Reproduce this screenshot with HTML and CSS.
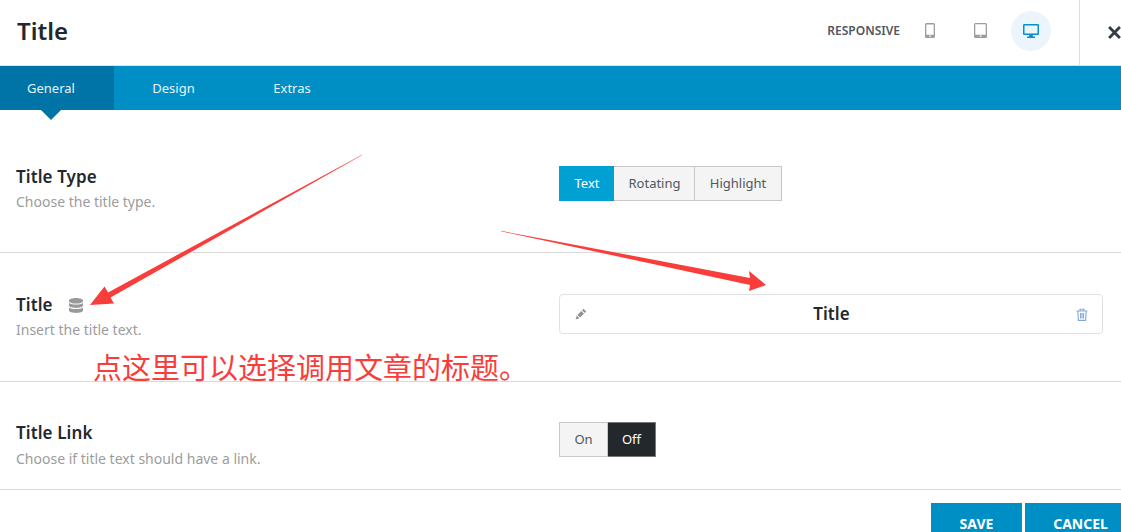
FILE: index.html
```html
<!DOCTYPE html>
<html lang="en">
<head>
    <meta charset="UTF-8">
    <meta name="viewport" content="width=device-width, initial-scale=1.0">
    <title>Title</title>
    <link rel="stylesheet" href="styles.css">
</head>
<body>
    <header class="top-bar">
        <h1 class="top-title">Title</h1>
        <div class="responsive">
            <span class="responsive-label">RESPONSIVE</span>
            <button class="device-btn" type="button">
                <svg width="10" height="15" viewBox="0 0 10 15"><path fill="#9a9ea3" fill-rule="evenodd" d="M1.5 0h7A1.5 1.5 0 0 1 10 1.500v12A1.500 1.500 0 0 1 8.500 15h-7A1.500 1.500 0 0 1 0 13.500v-12A1.500 1.500 0 0 1 1.500 0zM1.300 1.500v10.200h7.400V1.500zM4.200 12.500v1.300h1.600v-1.300z"/></svg>
            </button>
            <button class="device-btn" type="button">
                <svg width="13" height="15" viewBox="0 0 13 15"><path fill="#9a9ea3" fill-rule="evenodd" d="M1.500 0h10A1.500 1.500 0 0 1 13 1.500v12a1.500 1.500 0 0 1-1.500 1.500h-10A1.500 1.500 0 0 1 0 13.500v-12A1.500 1.500 0 0 1 1.500 0zM1.300 1.300v10.500h10.400V1.300zM5.700 12.500v1.300h1.600v-1.300z"/></svg>
            </button>
            <button class="device-btn device-active" type="button">
                <svg width="16" height="14" viewBox="0 0 16 14"><path fill="#0b8fc7" fill-rule="evenodd" d="M1.200 0h13.600A1.200 1.200 0 0 1 16 1.200v8.600A1.200 1.200 0 0 1 14.800 11H9.800v1.500H12V14H4v-1.500h2.200V11H1.200A1.200 1.200 0 0 1 0 9.800V1.200A1.200 1.200 0 0 1 1.200 0zM1.500 1.500v8h13v-8z"/></svg>
            </button>
        </div>
        <button class="close-btn" type="button">
            <svg width="13" height="13" viewBox="0 0 12 12"><path stroke="#333b45" stroke-width="2.600" d="M1 1l10 10M11 1L1 11"/></svg>
        </button>
    </header>

    <nav class="tabs">
        <a class="tab tab-active">General</a>
        <a class="tab">Design</a>
        <a class="tab">Extras</a>
    </nav>

    <main>
        <section class="row row-type">
            <div class="row-info">
                <h2 class="row-title">Title Type</h2>
                <p class="row-desc">Choose the title type.</p>
            </div>
            <div class="btn-group">
                <span class="opt opt-blue">Text</span>
                <span class="opt opt-rotating">Rotating</span>
                <span class="opt opt-highlight">Highlight</span>
            </div>
        </section>

        <section class="row row-text">
            <div class="row-info">
                <h2 class="row-title">Title
                    <svg class="db-icon" width="14" height="15" viewBox="0 0 14 15"><path fill="#9a9a9a" d="M7 0c3.800 0 7 1 7 2.400v.8C14 4.600 10.800 5.600 7 5.600S0 4.600 0 3.200v-.8C0 1 3.200 0 7 0zM0 5c1.500 1 4 1.500 7 1.500S12.500 6 14 5v2.600C14 9 10.800 10 7 10S0 9 0 7.600zM0 9.400c1.500 1 4 1.500 7 1.500s5.500-.5 7-1.500v3.200C14 14 10.800 15 7 15s-7-1-7-2.400z"/></svg>
                </h2>
                <p class="row-desc">Insert the title text.</p>
            </div>
            <div class="title-field">
                <svg width="12" height="12" viewBox="0 0 12 12"><path fill="#8d9296" d="M8.500.8l2.700 2.700-1.500 1.500L7 2.300zM6.300 3l2.700 2.700-4 3.800-2.600-2.600zM1.800 7.600l2.600 2.600L.6 11.400z"/></svg>
                <span class="field-text">Title</span>
                <svg width="12" height="13" viewBox="0 0 12 13"><path fill="none" stroke="#85a9d8" stroke-width="1.100" d="M.5 3h11M4 3V1.200h4V3M1.800 3l.6 9.400h7.200l.6-9.400M4.500 5v5.500M6 5v5.500M7.500 5v5.500"/></svg>
            </div>
        </section>

        <section class="row row-link">
            <div class="row-info">
                <h2 class="row-title">Title Link</h2>
                <p class="row-desc">Choose if title text should have a link.</p>
            </div>
            <div class="btn-group">
                <span class="opt opt-on">On</span>
                <span class="opt opt-dark">Off</span>
            </div>
        </section>
    </main>

    <footer class="actions">
        <button class="action-btn btn-save" type="button">SAVE</button>
        <button class="action-btn btn-cancel" type="button">CANCEL</button>
    </footer>

    <!-- red notes drawn on top of the screenshot -->
    <svg class="notes" width="1121" height="532" viewBox="0 0 1121 532">
        <path fill="#f93d3b" d="M362 154.700L362.300 155.100 110.500 297.500 114 303.500 90 305 104.500 286.500 108 292.500z"/>
        <path fill="#f93d3b" d="M501 230.800L750 278 749 271 766 285 749 291 750 285 501 231.200z"/>
    </svg>
    <div class="note-text">点这里可以选择调用文章的标题。</div>
</body>
</html>
```

FILE: styles.css
```css
* {
    box-sizing: border-box;
}
html, body {
    height: 532px;
    overflow: hidden;
}
body {
    position: relative;
    margin: 0;
    background: white;
    color: #23282d;
    font-family: "Noto Sans", "Open Sans", sans-serif;
}
button {
    font-family: inherit;
    border: none;
    background: none;
    padding: 0;
}

/* top bar */
.top-bar {
    display: flex;
    align-items: center;
    height: 66px;
    border-bottom: 1px solid #e1e1e1;
    padding-left: 17px;
}
.top-title {
    margin: 0 0 4px;
    font-size: 24px;
    line-height: 32px;
    font-weight: 600;
    flex: 1;
}
.responsive {
    display: flex;
    align-items: center;
    margin-bottom: 4px;
    margin-right: 28px;
}
.responsive-label {
    font-size: 12px;
    font-weight: 600;
    color: #50575e;
    margin-right: 10px;
}
.device-btn {
    width: 40px;
    height: 40px;
    border-radius: 50%;
    display: flex;
    align-items: center;
    justify-content: center;
}
.device-btn + .device-btn {
    margin-left: 10px;
}
.device-btn.device-active {
    margin-left: 11px;
    background: #edf5fc;
}
.close-btn {
    width: 42px;
    height: 65px;
    border-left: 1px solid #dcdcdc;
    display: flex;
    align-items: center;
    justify-content: flex-start;
    padding-left: 28px;
    flex: none;
}

/* tabs */
.tabs {
    display: flex;
    height: 44px;
    background: #008fc5;
}
.tab {
    position: relative;
    width: 118px;
    font-size: 13px;
    line-height: 44px;
    color: #e6f4fa;
    text-align: center;
}
.tabs .tab:first-child {
    width: 114px;
    padding-right: 12px;
}
.tabs .tab:nth-child(2) {
    width: 119px;
}
.tab-active {
    background: #0074a7;
}
.tab-active::after {
    content: "";
    position: absolute;
    left: 41px;
    top: 100%;
    border-left: 10px solid transparent;
    border-right: 10px solid transparent;
    border-top: 10px solid #0074a7;
}

/* option rows */
.row {
    display: grid;
    grid-template-columns: 543px 544px;
    border-bottom: 1px solid #d9d9d9;
    padding-left: 16px;
}
.row-type {
    height: 143px;
    padding-top: 56px;
}
.row-text {
    height: 129px;
    padding-top: 41px;
}
.row-link {
    height: 108px;
    padding-top: 40px;
}
.row-title {
    margin: 0;
    font-size: 17px;
    letter-spacing: 0.100px;
    line-height: 22px;
    font-weight: 600;
    display: flex;
    align-items: center;
}
.db-icon {
    margin-left: 16px;
}
.row-desc {
    margin: 4px 0 0;
    font-size: 14px;
    line-height: 19px;
    color: #9c9c9c;
}
.row-link .row-desc {
    margin-top: 5px;
}
.btn-group {
    display: flex;
    height: 35px;
}
.opt {
    font-size: 13px;
    line-height: 33px;
    text-align: center;
    color: #50575e;
    background: #f4f4f4;
    border: 1px solid #c8c8c8;
    border-left-width: 0;
}
.opt:first-child {
    border-left-width: 1px;
}
.opt-blue {
    width: 55px;
    padding-left: 1px;
    background: #00a0d2;
    border-color: #00a0d2;
    color: white;
}
.opt-rotating {
    width: 81px;
    padding-left: 1px;
}
.opt-highlight {
    width: 87px;
}
.opt-on {
    width: 49px;
}
.opt-dark {
    width: 48px;
    background: #23282d;
    border-color: #777;
    color: white;
}
.title-field {
    display: flex;
    align-items: center;
    justify-content: space-between;
    height: 40px;
    padding: 0 14px 0 15px;
    border: 1px solid #e1e1e1;
    border-radius: 4px;
}
.field-text {
    font-size: 17px;
    letter-spacing: 0.100px;
    font-weight: 600;
    margin-bottom: 2px;
}

/* footer buttons */
.actions {
    display: flex;
    justify-content: flex-end;
    gap: 3px;
    padding-top: 13px;
    margin-right: -15px;
}
.action-btn {
    width: 91px;
    height: 50px;
    padding-bottom: 10px;
    background: #008fc5;
    color: white;
    font-size: 14px;
    font-weight: 700;
}
.btn-cancel {
    width: 111px;
}

/* annotations */
.notes {
    position: absolute;
    left: 0;
    top: 0;
    pointer-events: none;
}
.note-text {
    position: absolute;
    left: 93px;
    top: 345px;
    font-family: "Noto Sans CJK SC", sans-serif;
    font-size: 29px;
    line-height: 42px;
    color: #f93d3b;
    white-space: nowrap;
}
```
